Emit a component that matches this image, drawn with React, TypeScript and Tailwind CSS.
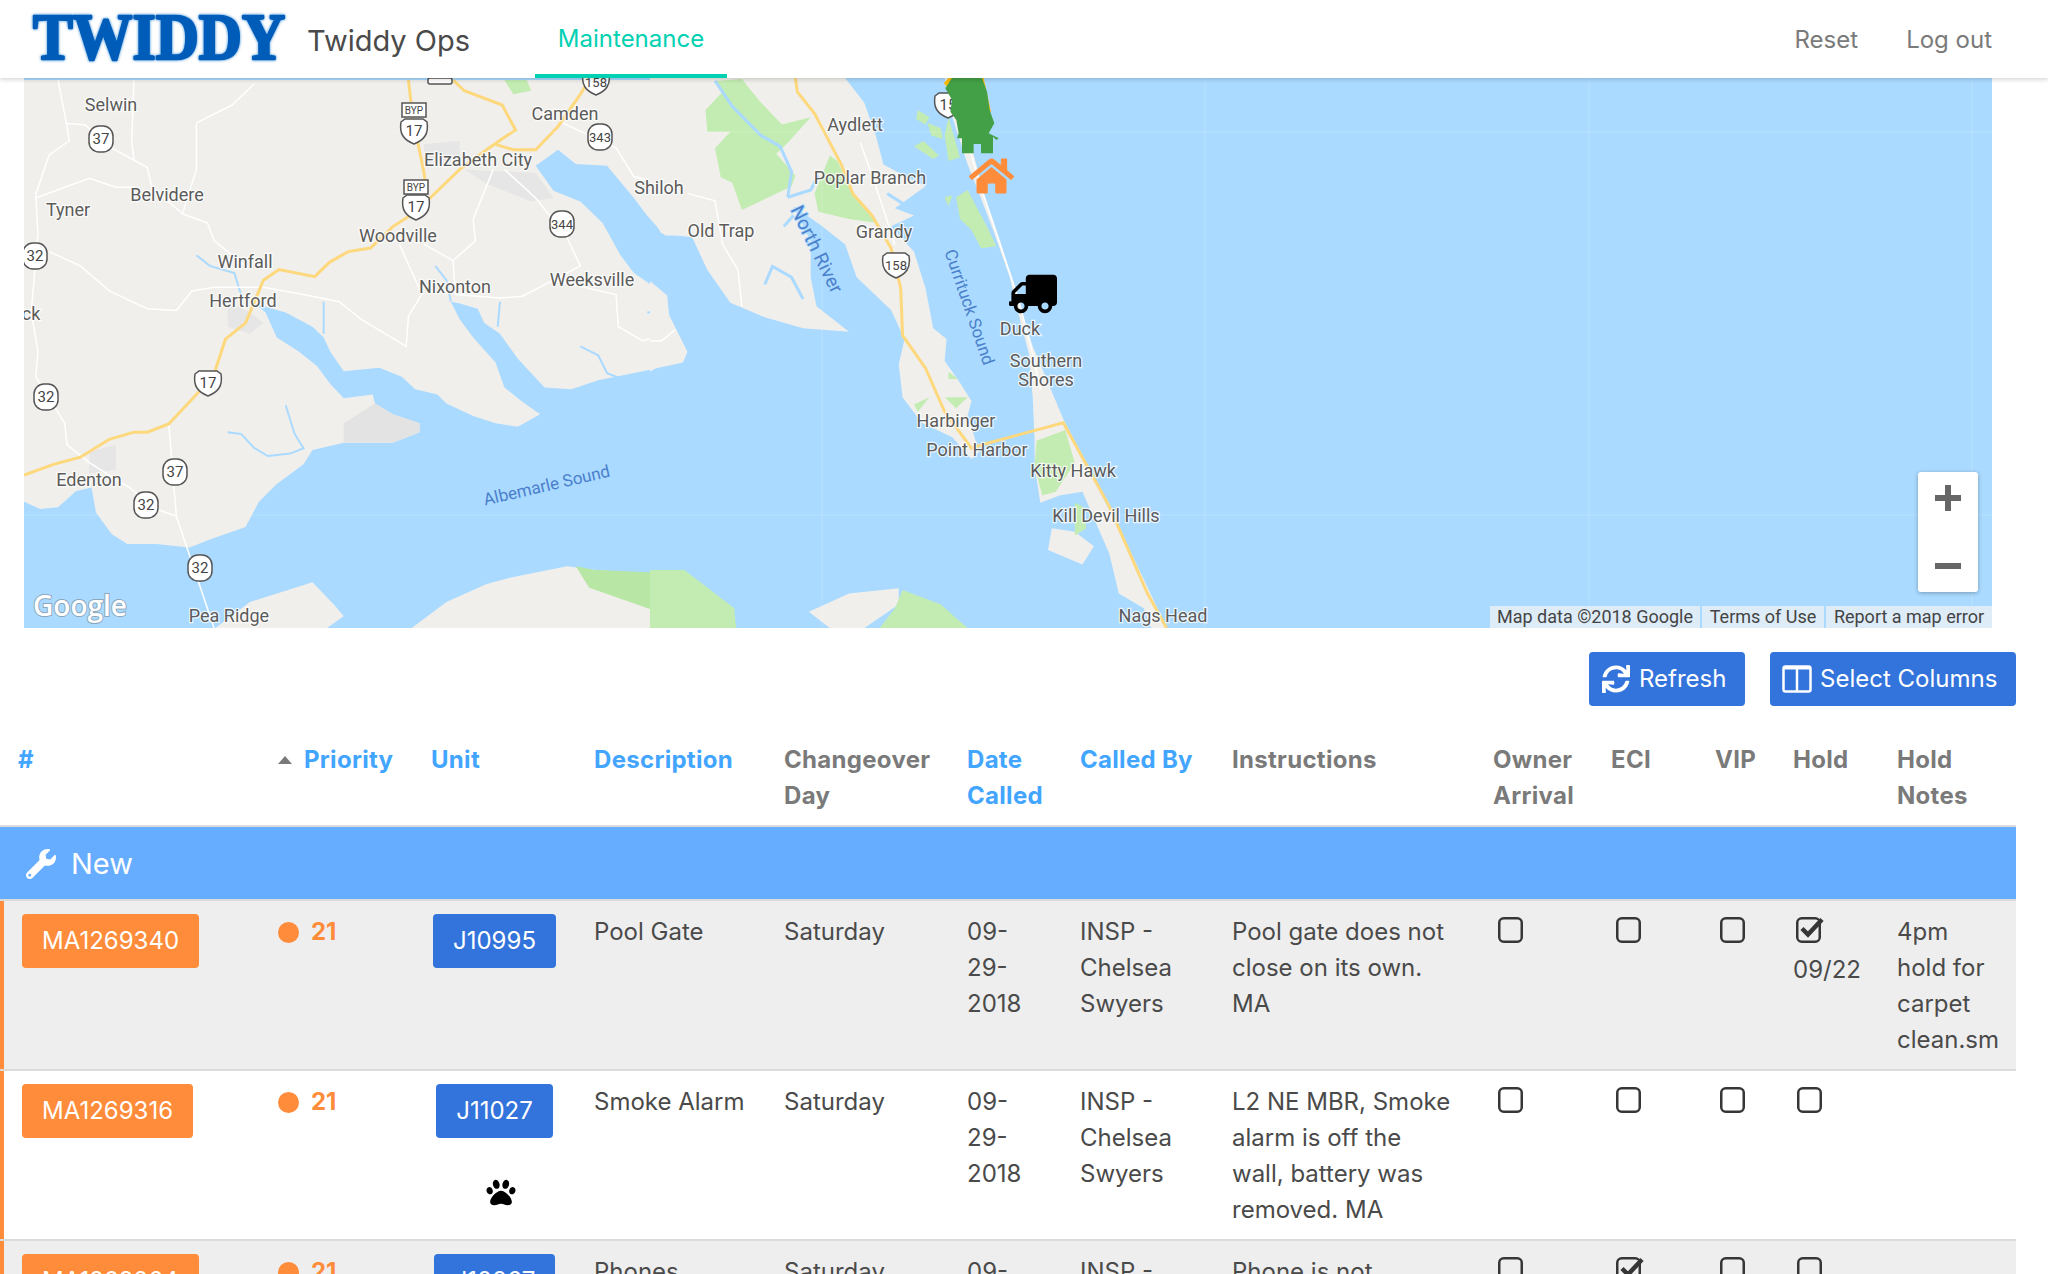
import { FaHome, FaPaw, FaSync, FaTruck, FaWrench } from "react-icons/fa";

const uiFont = "font-['Inter','Noto_Sans',sans-serif]";

const WEST = "translate(0 80) scale(.4464 .3575)";
const EAST = "translate(650 70) scale(.3827 .3636)";

const westLand = [
  "M0 0L1568 0L1568 435L1490 435L1450 380L1420 330L1360 240L1290 235L1250 195L1200 240L1240 310L1300 340L1350 400L1390 490L1420 540L1490 600L1500 660L1540 760L1530 790L1440 815L1340 840L1280 865L1220 860L1160 780L1120 710L1085 680L1070 640L1030 625L1010 620L1030 670L1060 720L1110 790L1130 860L1170 900L1210 935L1160 970L1110 960L1060 940L1000 905L980 880L930 865L900 830L850 805L770 815L740 760L725 720L700 690L640 650L570 625L595 650L620 720L670 760L710 800L740 850L770 890L835 880L840 905L880 935L940 960L940 985L880 1015L770 1015L700 1035L680 1075L620 1130L580 1180L550 1250L470 1285L425 1308L350 1298L285 1298L250 1270L215 1210L205 1140L170 1150L130 1195L90 1200L54 1180L0 1180Z",
  "M480 1535L560 1460L700 1405L750 1470L770 1500L730 1535Z",
  "M920 1535L1000 1460L1090 1410L1150 1390L1270 1360L1330 1370L1480 1385L1568 1420L1568 1535Z",
];

const westInlets = [
  "M510 985L540 990L570 1030L600 1052L650 1045L680 1030L660 990L640 910",
  "M1300 745L1340 770L1360 820L1390 835",
  "M1500 650L1450 650",
  "M1010 620L1000 560L975 520",
  "M440 490L470 520L525 540L540 600",
  "M1120 620L1115 690",
  "M725 620L725 710",
];

const westRoads = [
  "M130 0L150 130L155 170L110 210L80 320L85 430L70 650L85 760L80 830L145 960L150 1020L200 1070L290 1140L350 1200L395 1220L480 1535",
  "M150 122L190 125L250 190L330 245L340 300L410 375L465 400L480 450L560 530",
  "M80 330L200 275L260 300L300 300",
  "M300 0L295 170L300 225",
  "M110 480L180 520L245 590L330 640L395 645L430 590L480 580L590 580L680 600L760 620L810 670L910 745L915 660L945 600L895 460",
  "M1105 250L1060 390L1065 450L1015 505L1020 600L1120 610L1170 605L1240 560L1300 520L1270 440L1200 330L1130 250",
  "M1015 505L950 460",
  "M378 962L395 1220",
  "M440 120L520 70L570 10M440 120L440 250L410 370",
  "M1260 120L1380 190L1420 270L1568 320",
  "M1240 560L1380 600L1385 690L1440 730L1510 700",
];

const westHighways = [
  "M54 1105L120 1075L180 1055L245 1005L300 985L330 985L378 962L440 880L480 820L505 725L550 680L590 560L625 530L705 550L738 510L780 480L830 470L880 410L930 370L1030 250L1090 195L1130 160L1155 140L1125 70L1040 30L1015 0",
  "M915 0L925 110L950 260L955 310",
  "M1110 180L1150 195L1200 195L1250 130L1300 40L1320 0",
];

const eastLand = [
  "M0 22L510 22L560 90L590 180L610 260L680 300L720 320L640 380L690 400L630 430L690 500L720 600L740 710L775 740L770 800L810 860L840 910L830 950L860 1050L840 1070L790 1010L710 970L660 900L650 810L665 740L630 660L590 620L540 570L510 480L450 430L410 400L375 375L420 470L420 570L435 650L520 720L400 710L300 680L210 640L150 550L110 460L30 450L0 400Z",
  "M770 22L790 22L830 170L870 330L915 470L950 590L1000 760L1080 960L1160 1130L1220 1250L1290 1400L1350 1535L1310 1535L1290 1480L1225 1440L1200 1330L1130 1160L1070 1170L1020 1190L1005 1090L1005 1020L1000 900L990 780L965 680L940 570L900 450L860 340L830 260L790 130Z",
  "M1050 1260L1110 1270L1160 1310L1130 1360L1040 1320Z",
  "M415 1490L520 1440L650 1425L650 1470L560 1535L470 1535Z",
  "M0 580L45 620L50 680L90 770L0 830Z",
];

const eastGreen = [
  "M145 110L190 60L170 30L240 25L290 90L345 150L420 130L360 200L330 230L380 290L370 320L240 385L215 310L185 295L170 215L210 170L150 170Z",
  "M470 235L490 250L530 340L590 420L520 410L440 390L430 340Z",
  "M780 130L810 240L780 250L770 180Z",
  "M700 110L730 130L720 150L695 135Z",
  "M725 145L760 160L765 190L735 180Z",
  "M690 210L715 195L755 235L740 245Z",
  "M770 350L790 345L780 375Z",
  "M800 350L830 330L880 430L905 485L865 490L840 440L810 410Z",
  "M1010 1020L1085 990L1110 1080L1060 1160L1025 1170L1005 1090Z",
  "M1110 1190L1130 1200L1140 1260L1110 1280Z",
  "M0 1375L90 1375L220 1480L225 1535L0 1535Z",
  "M660 1430L760 1470L830 1535L600 1535L640 1480Z",
  "M780 830L805 850L780 850Z",
  "M690 920L730 900L700 940Z",
  "M770 900L830 900L800 930Z",
];

const eastInlets = [
  "M360 350L370 280L340 210L290 180L215 100L170 30",
  "M360 350L420 330L440 290",
  "M375 400L350 430",
  "M300 590L320 540L370 570L400 630",
  "M620 340L680 380",
  "M720 560L750 630",
];

const mapLabels = [
  ["Selwin", 111, 105], ["Camden", 565, 114], ["Aydlett", 855, 125], ["Belvidere", 167, 195],
  ["Elizabeth City", 478, 160], ["Poplar Branch", 870, 178], ["Shiloh", 659, 188], ["Tyner", 68, 210],
  ["Old Trap", 721, 231], ["Grandy", 884, 232], ["Woodville", 398, 236], ["Winfall", 245, 262],
  ["Weeksville", 592, 280], ["Nixonton", 455, 287], ["Hertford", 243, 301], ["ck", 31, 314],
  ["Duck", 1020, 329], ["Southern", 1046, 361], ["Shores", 1046, 380], ["Harbinger", 956, 421],
  ["Point Harbor", 977, 450], ["Edenton", 89, 480], ["Kitty Hawk", 1073, 471], ["Kill Devil Hills", 1106, 516],
  ["Pea Ridge", 229, 616], ["Nags Head", 1163, 616],
] as const;

const stateShields = [
  ["37", 101, 139], ["343", 600, 137], ["344", 562, 224], ["32", 35, 256],
  ["32", 46, 397], ["37", 175, 472], ["32", 146, 505], ["32", 200, 568],
] as const;

const usShields = [
  ["17", 414, 131], ["17", 416, 207], ["17", 208, 383], ["158", 596, 82], ["158", 896, 265], ["15", 948, 105],
] as const;

function MapCanvas() {
  return (
    <svg viewBox="24 78 1968 550" className="h-full w-full" style={{ fontFamily: "Roboto, sans-serif" }}>
      <rect x="24" y="78" width="1968" height="550" fill="#aadaff" />
      <g transform={WEST}>
        {westLand.map((d) => <path key={d} d={d} fill="#f0efeb" />)}
        <path d="M1290 1360L1330 1370L1500 1380L1568 1420L1568 1500L1500 1535L1480 1490L1320 1420Z" fill="#b8e6a4" />
        <path d="M770 960L840 905L880 935L940 960L940 985L880 1015L770 1015Z" fill="#e3e3e3" />
        <path d="M510 620L560 650L590 680L560 710L510 690Z" fill="#e6e6e6" />
        <path d="M950 180L1030 170L1030 220L950 235Z" fill="#e6e6e6" />
        <path d="M1040 250L1200 260L1240 330L1190 340L1090 290Z" fill="#e6e6e6" />
        <path d="M200 1040L260 1020L260 1090L200 1100Z" fill="#e6e6e6" />
        <path d="M1130 0L1180 0L1190 30L1150 40Z" fill="#c3ecb2" />
        {westInlets.map((d) => <path key={d} d={d} fill="none" stroke="#aadaff" strokeWidth="2" vectorEffect="non-scaling-stroke" />)}
        {westRoads.map((d) => <path key={d} d={d} fill="none" stroke="#fff" strokeWidth="1.5" vectorEffect="non-scaling-stroke" />)}
        {westHighways.map((d) => <path key={d} d={d} fill="none" stroke="#fdd87d" strokeWidth="3" vectorEffect="non-scaling-stroke" />)}
      </g>
      <g transform={EAST}>
        {eastLand.map((d) => <path key={d} d={d} fill="#f0efeb" />)}
        {eastGreen.map((d) => <path key={d} d={d} fill="#c3ecb2" />)}
        {eastInlets.map((d) => <path key={d} d={d} fill="none" stroke="#aadaff" strokeWidth="3" vectorEffect="non-scaling-stroke" />)}
        <path d="M550 200L590 320L640 480M100 340L170 360L190 480L230 550L240 650M0 745L30 745L65 715M810 130L870 340L960 620L1000 780L1020 880" fill="none" stroke="#fff" strokeWidth="1.5" vectorEffect="non-scaling-stroke" />
        <path d="M380 22L385 60L430 120L500 260L530 340L580 400L630 490L655 600L660 730L720 820L770 940L840 1040L870 1030L1080 970L1200 1200L1300 1440L1350 1535" fill="none" stroke="#fdd87d" strokeWidth="3" vectorEffect="non-scaling-stroke" />
      </g>
      <g stroke="#fff" strokeOpacity=".18" strokeWidth="1">
        <path d="M822 78V628M1205 78V628M1589 78V628M1972 78V628M24 132H1992M24 515H1992" />
      </g>
      {stateShields.map(([n, x, y]) => (
        <g key={`${n}-${x}`}>
          <rect x={x - 12} y={y - 13} width="24" height="26" rx="10" fill="#fff" stroke="#555" strokeWidth="1.5" />
          <text x={x} y={y + 5} textAnchor="middle" fontSize={n.length > 2 ? 13 : 15} fill="#444">{n}</text>
        </g>
      ))}
      {usShields.map(([n, x, y]) => (
        <g key={`${n}-${x}`}>
          <path d={`M${x - 13} ${y - 9}L${x - 9} ${y - 12}H${x + 9}L${x + 13} ${y - 9}C${x + 15} ${y + 3} ${x + 10} ${y + 9} ${x} ${y + 13}C${x - 10} ${y + 9} ${x - 15} ${y + 3} ${x - 13} ${y - 9}Z`} fill="#fff" stroke="#555" strokeWidth="1.5" />
          <text x={x} y={y + 5} textAnchor="middle" fontSize={n.length > 2 ? 13 : 15} fill="#444">{n}</text>
        </g>
      ))}
      {[[414, 110], [416, 187]].map(([x, y]) => (
        <g key={x}>
          <rect x={x - 12} y={y - 7} width="24" height="14" fill="#fff" stroke="#555" strokeWidth="1.5" />
          <text x={x} y={y + 4} textAnchor="middle" fontSize="10" fill="#444">BYP</text>
        </g>
      ))}
      <rect x="428" y="78" width="24" height="6" rx="2" fill="#fff" stroke="#555" strokeWidth="1.5" />
      {mapLabels.map(([label, x, y]) => (
        <text key={label} x={x} y={y + 6} textAnchor="middle" fontSize="18" fill="#5b5b5b" stroke="#fff" strokeOpacity=".75" strokeWidth="2.5" paintOrder="stroke">
          {label}
        </text>
      ))}
      <g fill="#4a80cc" stroke="#aadaff" strokeWidth="2" paintOrder="stroke" textAnchor="middle">
        <text transform="translate(811 252) rotate(64)" fontSize="19">North River</text>
        <text transform="translate(964 309) rotate(71)" fontSize="17">Currituck Sound</text>
        <text transform="translate(548 491) rotate(-13)" fontSize="17">Albemarle Sound</text>
      </g>
      <text x="33" y="616" fontSize="28" fontWeight="600" fill="#fff" stroke="#666" strokeOpacity=".45" strokeWidth="2" paintOrder="stroke" style={{ fontFamily: "'Open Sans', sans-serif" }}>Google</text>
      <g transform="translate(917 70) scale(.3333)">
        <path d="M80 40L95 24H200L222 125L215 130L100 60Z" fill="#fbbc04" />
        <path d="M85 55L105 24H195L210 65L218 120L232 160L215 190L245 205L238 210L228 200V250H192V222H170V250H135V205L120 205L125 190L118 150L100 125L105 90Z" fill="#43a047" />
      </g>
    </svg>
  );
}

function MapPanel() {
  return (
    <div className="relative ml-6 h-[550px] w-[1968px] overflow-hidden">
      <MapCanvas />
      <FaHome className="absolute left-[945px] top-[78px] h-[40px] w-[45px] text-[#ff8c3a]" />
      <FaTruck className="absolute left-[985px] top-[194px] h-[44px] w-[48px] -scale-x-100 text-black" />
      <div className="absolute bottom-0 right-0 flex h-[22px] gap-0.5 text-[18px] leading-[22px] text-[#444] font-['Roboto',sans-serif]">
        <span className="w-[210px] bg-[#deecf8] text-center">Map data ©2018 Google</span>
        <span className="w-[122px] bg-[#deecf8] text-center">Terms of Use</span>
        <span className="w-[166px] bg-[#deecf8] text-center">Report a map error</span>
      </div>
      <div className="absolute left-[1894px] top-[394px] flex h-[120px] w-[60px] flex-col items-center rounded-[3px] bg-white shadow-[0_1px_4px_rgba(0,0,0,0.3)]">
        <div className="relative mt-[13px] h-[26px] w-[26px]">
          <div className="absolute left-0 top-[10px] h-[6px] w-[26px] bg-[#666]" />
          <div className="absolute left-[10px] top-0 h-[26px] w-[6px] bg-[#666]" />
        </div>
        <div className="mt-[52px] h-[6px] w-[26px] bg-[#666]" />
      </div>
    </div>
  );
}

function Logo() {
  return (
    <svg viewBox="0 0 258 50" className="h-[50px] w-[258px] overflow-visible">
      <text
        x="3"
        y="45"
        fontSize="65"
        fontWeight="700"
        textLength="252"
        lengthAdjust="spacingAndGlyphs"
        fill="#005cb9"
        stroke="#005cb9"
        strokeWidth="2.5"
        strokeLinejoin="round"
        style={{ fontFamily: "'Liberation Serif', serif", filter: "drop-shadow(0 0 1px #8fbfe8) drop-shadow(0 0 1px #8fbfe8)" }}
      >
        TWIDDY
      </text>
    </svg>
  );
}

function Navbar() {
  return (
    <nav className="relative z-10 flex h-[78px] items-center bg-white pl-[30px] pr-[56px] shadow-[0_2px_4px_rgba(0,0,0,0.15)]">
      <Logo />
      <span className="ml-[19px] pt-[3px] text-[29px] text-[#4a4a4a]">Twiddy Ops</span>
      <a className="ml-[65px] flex h-full w-[192px] items-center justify-center border-b-4 border-[#00d1b2] pt-[3px] text-[24px] text-[#00d1b2]">Maintenance</a>
      <div className="ml-auto flex gap-[48px] pt-[2px] text-[24px] text-[#7a7a7a]">
        <span>Reset</span>
        <span>Log out</span>
      </div>
    </nav>
  );
}

const headers: { label: string[]; sortable?: boolean; sorted?: boolean }[] = [
  { label: ["#"], sortable: true },
  { label: ["Priority"], sortable: true, sorted: true },
  { label: ["Unit"], sortable: true },
  { label: ["Description"], sortable: true },
  { label: ["Changeover", "Day"] },
  { label: ["Date", "Called"], sortable: true },
  { label: ["Called By"], sortable: true },
  { label: ["Instructions"] },
  { label: ["Owner", "Arrival"] },
  { label: ["ECI"] },
  { label: ["VIP"] },
  { label: ["Hold"] },
  { label: ["Hold", "Notes"] },
];

const rows = [
  {
    id: "MA1269340", unit: "J10995", desc: "Pool Gate", text: "Pool gate does not close on its own. MA",
    eci: false, hold: true, holdDate: "09/22", notes: "4pm hold for carpet clean.sm", pet: false,
  },
  {
    id: "MA1269316", unit: "J11027", desc: "Smoke Alarm", text: "L2 NE MBR, Smoke alarm is off the wall, battery was removed. MA",
    eci: false, hold: false, holdDate: "", notes: "", pet: true,
  },
  {
    id: "MA1269264", unit: "J10267", desc: "Phones", text: "Phone is not working in the unit. MA",
    eci: true, hold: false, holdDate: "", notes: "", pet: false,
  },
];

function Box({ checked }: { checked?: boolean }) {
  return (
    <svg viewBox="0 0 30 26" className="h-[26px] w-[30px] overflow-visible">
      <rect x="1.25" y="1.25" width="22.5" height="23.5" rx="4.5" fill="none" stroke="#363636" strokeWidth="2.5" />
      {checked && <path d="M6 11.5L12 17.5L26 2.5" fill="none" stroke="#363636" strokeWidth="4.5" />}
    </svg>
  );
}

function ColumnsIcon() {
  return (
    <svg viewBox="0 0 30 28" className="h-[28px] w-[30px]">
      <rect x="1.5" y="1.5" width="27" height="25" rx="2" fill="none" stroke="#fff" strokeWidth="2.5" />
      <path d="M2 3H28" stroke="#fff" strokeWidth="3" />
      <path d="M15 2V26" stroke="#fff" strokeWidth="2.5" />
    </svg>
  );
}

function MaintenanceTable() {
  return (
    <table className="mt-[36px] w-[2016px] table-fixed border-collapse text-left text-[24px] leading-[36px] text-[#4a4a4a]">
      <colgroup>
        <col className="w-[260px]" />
        <col className="w-[153px]" />
        <col className="w-[163px]" />
        <col className="w-[190px]" />
        <col className="w-[183px]" />
        <col className="w-[113px]" />
        <col className="w-[152px]" />
        <col className="w-[261px]" />
        <col className="w-[118px]" />
        <col className="w-[104px]" />
        <col className="w-[78px]" />
        <col className="w-[104px]" />
        <col className="w-[137px]" />
      </colgroup>
      <thead>
        <tr className="border-b-2 border-[#dbdbdb]">
          {headers.map((h) => (
            <th key={h.label.join()} className={`px-[18px] pb-[11px] align-top font-bold tracking-[0.3px] ${h.sortable ? "text-[#42a5ff]" : "text-[#7a7a7a]"}`}>
              {h.sorted ? (
                <div className="flex items-center gap-[12px]">
                  <span className="h-0 w-0 border-x-[7px] border-b-[8px] border-x-transparent border-b-[#7a7a7a]" />
                  {h.label[0]}
                </div>
              ) : (
                h.label.map((l) => <div key={l}>{l}</div>)
              )}
            </th>
          ))}
        </tr>
      </thead>
      <tbody>
        <tr className="border-b-2 border-[#dbdbdb] bg-[#66adff] text-white">
          <td colSpan={13} className="h-[74px] px-[26px] pt-[2px] text-[29px]">
            <div className="flex items-center gap-[15px]">
              <FaWrench className="h-[30px] w-[30px]" />
              New
            </div>
          </td>
        </tr>
        {rows.map((r, i) => (
          <tr key={r.id} className={`h-[170px] border-b-2 border-[#dbdbdb] align-top ${i % 2 === 0 ? "bg-[#eeeeee]" : "bg-white"}`}>
            <td className="pl-[22px] pt-[13px] shadow-[inset_4px_0_0_#ff8c3a]">
              <span className="inline-flex h-[54px] items-center rounded-[4px] bg-[#ff8c3a] px-[20px] text-white">{r.id}</span>
            </td>
            <td className="px-[18px] pt-[13px]">
              <div className="flex items-center gap-[12px] font-bold text-[#ff8c3a]">
                <span className="h-[21px] w-[21px] rounded-full bg-[#ff8c3a]" />
                21
              </div>
            </td>
            <td className="px-[18px] pt-[13px] text-center">
              <span className="inline-flex h-[54px] items-center rounded-[4px] bg-[#3273dc] px-[20px] text-white">{r.unit}</span>
              {r.pet && <FaPaw className="ml-[52px] mt-[40px] h-[29px] w-[36px] text-black" />}
            </td>
            <td className="px-[18px] pt-[13px]">{r.desc}</td>
            <td className="px-[18px] pt-[13px]">Saturday</td>
            <td className="px-[18px] pt-[13px]">09-29-2018</td>
            <td className="px-[18px] pt-[13px]">INSP - Chelsea Swyers</td>
            <td className="px-[18px] pt-[13px]">{r.text}</td>
            <td className="px-[18px] pt-[16px]"><div className="ml-[5px]"><Box /></div></td>
            <td className="px-[18px] pt-[16px]"><div className="ml-[5px]"><Box checked={r.eci} /></div></td>
            <td className="px-[18px] pt-[16px]"><div className="ml-[5px]"><Box /></div></td>
            <td className="px-[18px] pt-[16px]">
              <div className={r.hold ? "ml-[3px]" : "ml-[4px]"}><Box checked={r.hold} /></div>
              {r.holdDate && <div className="mt-[9px]">{r.holdDate}</div>}
            </td>
            <td className="px-[18px] pt-[13px]">{r.notes}</td>
          </tr>
        ))}
      </tbody>
    </table>
  );
}

export default function App() {
  return (
    <div className={`h-[1274px] w-[2048px] overflow-hidden bg-white ${uiFont}`}>
      <Navbar />
      <MapPanel />
      <div className="mr-[32px] mt-[24px] flex justify-end gap-[25px] text-[24px] text-white">
        <button className="flex h-[54px] w-[156px] items-center gap-[9px] rounded-[4px] bg-[#3273dc] pl-[13px]">
          <FaSync className="h-[28px] w-[28px]" />
          Refresh
        </button>
        <button className="flex h-[54px] w-[246px] items-center gap-[8px] rounded-[4px] bg-[#3273dc] pl-[12px]">
          <ColumnsIcon />
          Select Columns
        </button>
      </div>
      <MaintenanceTable />
    </div>
  );
}
